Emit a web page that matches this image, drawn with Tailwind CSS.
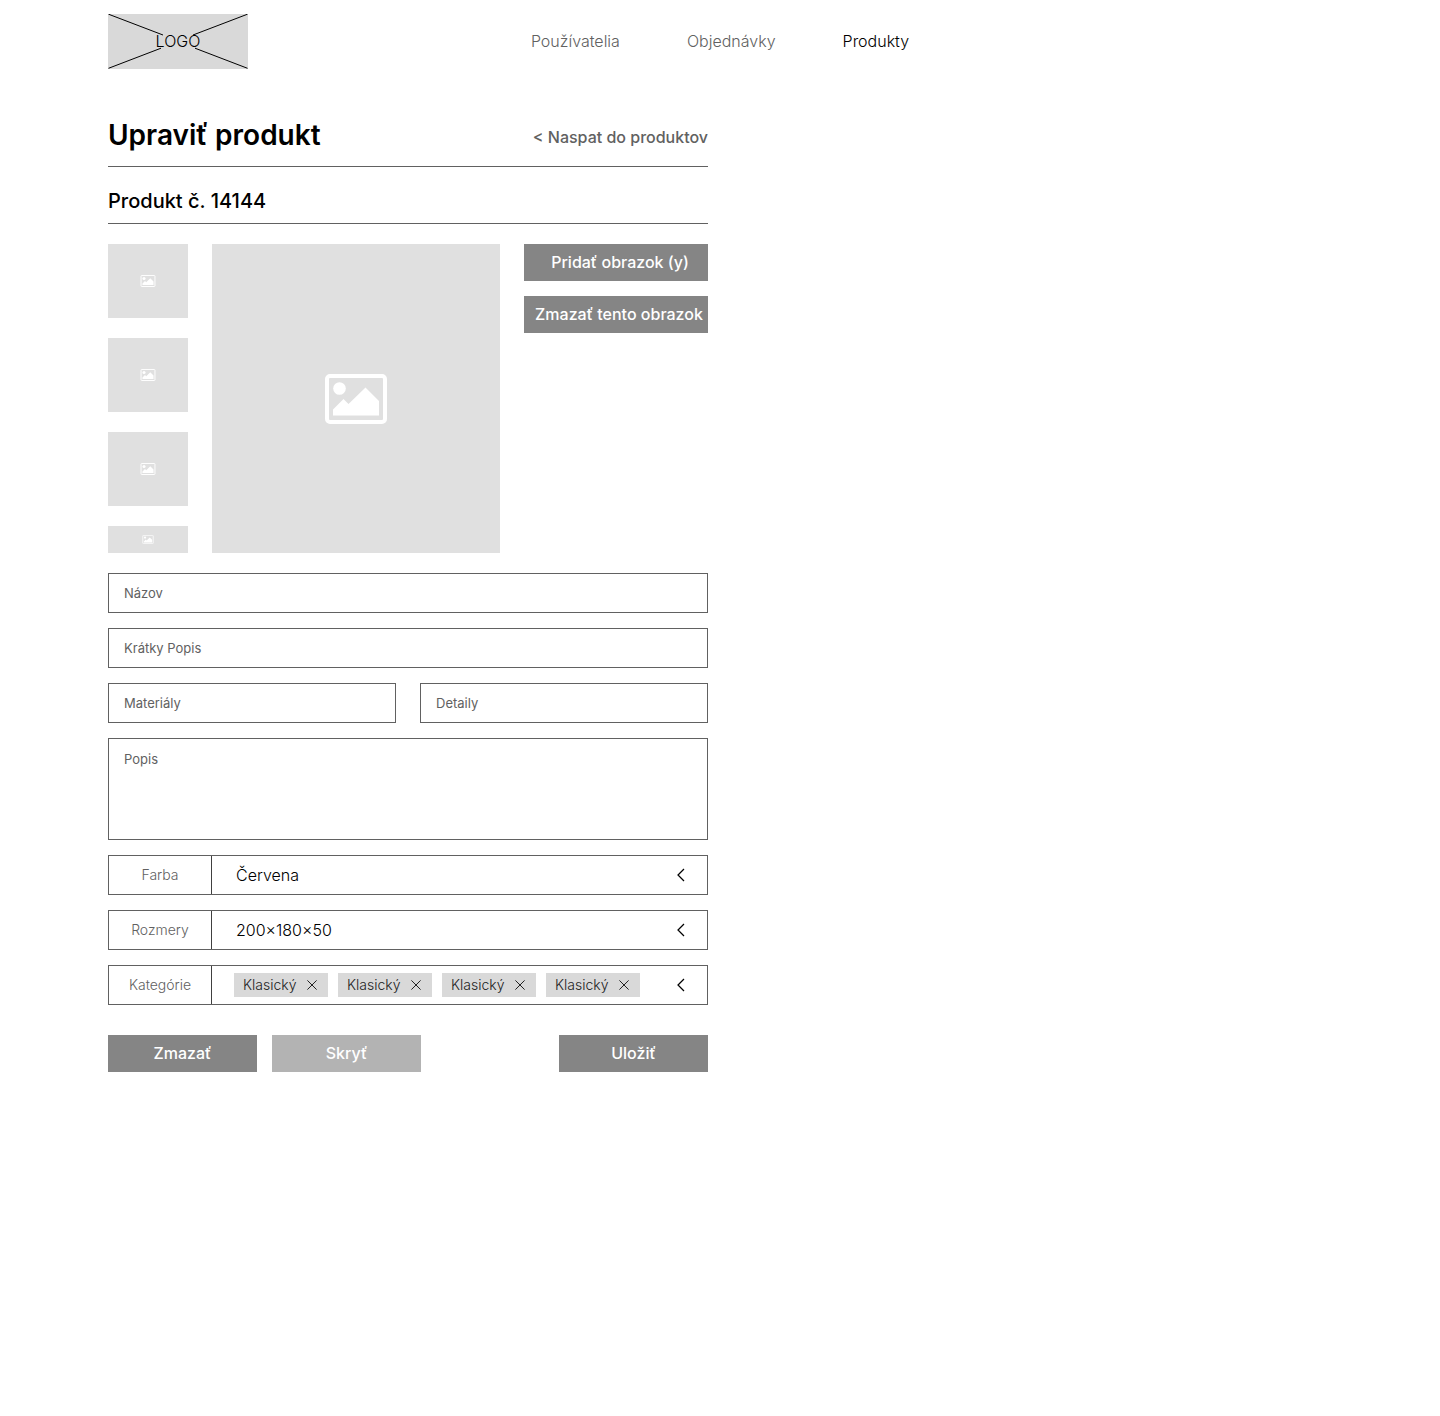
<!DOCTYPE html>
<html lang="sk">
<head>
<meta charset="utf-8">
<meta name="viewport" content="width=device-width, initial-scale=1">
<title>Upraviť produkt</title>
<script src="https://cdn.jsdelivr.net/npm/@tailwindcss/browser@4"></script>
</head>
<body class="min-h-screen bg-white font-['Inter',sans-serif] text-base text-black">
<svg class="hidden" aria-hidden="true">
  <symbol id="picture" viewBox="0 0 62 50">
    <rect x="2" y="2" width="58" height="46" rx="3" fill="none" stroke="#fff" stroke-width="4"/>
    <circle cx="14.500" cy="14.500" r="6.300" fill="#fff"/>
    <path d="M8 41.500V35.500L18.500 25L23.500 30L40.500 13.500L54 27V41.500Z" fill="#fff"/>
  </symbol>
  <symbol id="chevron" viewBox="0 0 8 14">
    <path d="M7 1L1 7L7 13" fill="none" stroke="#000" stroke-width="1.250"/>
  </symbol>
  <symbol id="cross" viewBox="0 0 10 10">
    <path d="M.4 .4L9.600 9.600M9.600 .4L.4 9.600" fill="none" stroke="#222" stroke-width="1"/>
  </symbol>
</svg>

<header class="grid grid-cols-[1fr_auto_1fr] items-center px-[108px] py-3.5">
  <a href="#" class="relative flex h-[55px] w-[140px] items-center justify-center bg-[#d9d9d9] pb-0.5 font-light">
    <svg class="absolute inset-0 h-full w-full" viewBox="0 0 140 55" fill="none" stroke="#000" aria-hidden="true">
      <path d="M.5 .2L55 21M139.500 .2L85 21M.5 54.300L53 34.200M139.500 54.300L87 34.200"/>
    </svg>
    <span class="relative">LOGO</span>
  </a>
  <nav class="flex gap-[67px] pb-0.5 font-light">
    <a href="#" class="text-[#616161]">Používatelia</a>
    <a href="#" class="text-[#616161]">Objednávky</a>
    <a href="#" aria-current="page">Produkty</a>
  </nav>
</header>

<main class="px-[108px] pt-[34px] pb-16">
  <div class="max-w-[600px]">
    <div class="flex items-center justify-between border-b border-[#616161] pb-[13px]">
      <h1 class="text-[28px] leading-9 font-semibold">Upraviť produkt</h1>
      <a href="#" class="pt-1 font-medium text-[#616161]">&lt; Naspat do produktov</a>
    </div>
    <h2 class="border-b border-[#616161] pt-5 pb-2 text-xl font-medium">Produkt č. 14144</h2>

    <form class="flex flex-col gap-[15px] pt-5">
      <div class="mb-[5px] grid grid-cols-[80px_minmax(0,1fr)_184px] gap-6">
        <div class="flex flex-col gap-5">
          <button type="button" aria-label="Obrázok 1" class="flex h-[74px] items-center justify-center bg-[#e0e0e0]"><svg class="h-3 w-4"><use href="#picture"/></svg></button>
          <button type="button" aria-label="Obrázok 2" class="flex h-[74px] items-center justify-center bg-[#e0e0e0]"><svg class="h-3 w-4"><use href="#picture"/></svg></button>
          <button type="button" aria-label="Obrázok 3" class="flex h-[74px] items-center justify-center bg-[#e0e0e0]"><svg class="h-3 w-4"><use href="#picture"/></svg></button>
          <button type="button" aria-label="Obrázok 4" class="flex h-[27px] items-center justify-center bg-[#e0e0e0]"><svg class="h-[9px] w-3"><use href="#picture"/></svg></button>
        </div>
        <div class="flex items-center justify-center bg-[#e0e0e0]"><svg class="h-[50px] w-[62px]"><use href="#picture"/></svg></div>
        <div class="flex flex-col gap-[15px]">
          <button type="button" class="h-[37px] bg-[#858585] pb-0.5 pl-2 font-medium whitespace-nowrap text-white">Pridať obrazok (y)</button>
          <button type="button" class="h-[37px] bg-[#858585] pb-0.5 pl-1.5 font-medium whitespace-nowrap text-white">Zmazať tento obrazok</button>
        </div>
      </div>

      <input type="text" aria-label="Názov" placeholder="Názov" class="h-10 border border-[#616161] px-[15px] text-[13px] placeholder:text-[#616161]">
      <input type="text" aria-label="Krátky Popis" placeholder="Krátky Popis" class="h-10 border border-[#616161] px-[15px] text-[13px] placeholder:text-[#616161]">
      <div class="grid grid-cols-2 gap-6">
        <input type="text" aria-label="Materiály" placeholder="Materiály" class="h-10 min-w-0 border border-[#616161] px-[15px] text-[13px] placeholder:text-[#616161]">
        <input type="text" aria-label="Detaily" placeholder="Detaily" class="h-10 min-w-0 border border-[#616161] px-[15px] text-[13px] placeholder:text-[#616161]">
      </div>
      <textarea aria-label="Popis" placeholder="Popis" class="h-[102px] resize-none border border-[#616161] px-[15px] py-2.5 text-[13px] leading-5 placeholder:text-[#616161]"></textarea>

      <div class="relative flex h-10 border border-[#616161]">
        <label for="farba" class="flex w-[103px] items-center justify-center border-r border-[#404040] text-sm font-light text-[#616161]">Farba</label>
        <select id="farba" class="flex-1 appearance-none bg-transparent pl-6 font-light"><option>Červena</option></select>
        <svg class="pointer-events-none absolute top-3 right-[22px] h-3.5 w-2"><use href="#chevron"/></svg>
      </div>
      <div class="relative flex h-10 border border-[#616161]">
        <label for="rozmery" class="flex w-[103px] items-center justify-center border-r border-[#404040] text-sm font-light text-[#616161]">Rozmery</label>
        <select id="rozmery" class="flex-1 appearance-none bg-transparent pl-6 font-light"><option>200×180×50</option></select>
        <svg class="pointer-events-none absolute top-3 right-[22px] h-3.5 w-2"><use href="#chevron"/></svg>
      </div>
      <div role="group" aria-labelledby="kategorie" class="flex h-10 border border-[#616161] text-sm font-light">
        <span id="kategorie" class="flex w-[103px] items-center justify-center border-r border-[#404040] text-[#616161]">Kategórie</span>
        <ul class="flex flex-1 items-center gap-2.5 pl-[22px] text-[#222]">
          <li class="flex h-6 w-[94px] items-center justify-between bg-[#d9d9d9] pr-[11px] pl-[9px]">Klasický<button type="button" aria-label="Odstrániť"><svg class="size-2.5"><use href="#cross"/></svg></button></li>
          <li class="flex h-6 w-[94px] items-center justify-between bg-[#d9d9d9] pr-[11px] pl-[9px]">Klasický<button type="button" aria-label="Odstrániť"><svg class="size-2.5"><use href="#cross"/></svg></button></li>
          <li class="flex h-6 w-[94px] items-center justify-between bg-[#d9d9d9] pr-[11px] pl-[9px]">Klasický<button type="button" aria-label="Odstrániť"><svg class="size-2.5"><use href="#cross"/></svg></button></li>
          <li class="flex h-6 w-[94px] items-center justify-between bg-[#d9d9d9] pr-[11px] pl-[9px]">Klasický<button type="button" aria-label="Odstrániť"><svg class="size-2.5"><use href="#cross"/></svg></button></li>
        </ul>
        <button type="button" aria-label="Otvoriť kategórie" class="pr-[22px] pl-4"><svg class="h-3.5 w-2"><use href="#chevron"/></svg></button>
      </div>

      <div class="mt-[15px] flex gap-[15px] font-medium text-white">
        <button type="button" class="h-[37px] w-[149px] bg-[#858585] pb-0.5">Zmazať</button>
        <button type="button" class="h-[37px] w-[149px] bg-[#b3b3b3] pb-0.5">Skryť</button>
        <button type="submit" class="ml-auto h-[37px] w-[149px] bg-[#858585] pb-0.5">Uložiť</button>
      </div>
    </form>
  </div>
</main>
</body>
</html>
